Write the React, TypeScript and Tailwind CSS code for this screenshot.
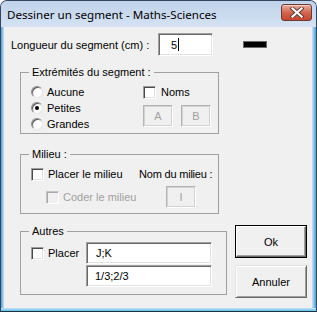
import React from "react";

function Radio({ checked }: { checked?: boolean }) {
  return (
    <div className="w-[12px] h-[12px] rounded-full bg-white border border-t-[#8c8c8c] border-l-[#8c8c8c] border-r-[#e6e6e6] border-b-[#e6e6e6] shadow-[inset_1px_1px_0_#5a5a5a] flex items-center justify-center shrink-0">
      {checked ? <div className="w-[4px] h-[4px] rounded-full bg-black" /> : null}
    </div>
  );
}

function Check({ disabled }: { disabled?: boolean }) {
  return disabled ? (
    <div className="w-[13px] h-[13px] bg-[#f0f0f0] border border-t-[#c4c4c4] border-l-[#c4c4c4] border-r-white border-b-white shadow-[inset_1px_1px_0_#a8a8a8] shrink-0" />
  ) : (
    <div className="w-[13px] h-[13px] bg-white border border-t-[#9c9c9c] border-l-[#9c9c9c] border-r-white border-b-white shadow-[inset_1px_1px_0_#4a4a4a,inset_-1px_-1px_0_#e3e3e3] shrink-0" />
  );
}

function TextBox({
  className,
  children,
}: {
  className: string;
  children?: React.ReactNode;
}) {
  return (
    <div
      className={
        "bg-white border border-t-[#a0a0a0] border-l-[#a0a0a0] border-r-white border-b-white shadow-[inset_1px_1px_0_#696969,inset_-1px_-1px_0_#e3e3e3] flex items-center " +
        className
      }
    >
      {children}
    </div>
  );
}

function DisabledBox({ className, text }: { className: string; text: string }) {
  return (
    <div
      className={
        "bg-[#f0f0f0] border border-t-[#b4b4b4] border-l-[#b4b4b4] border-r-white border-b-white shadow-[inset_1px_1px_0_#d2d2d2,inset_-1px_-1px_0_#d2d2d2] flex items-center justify-center text-[#a0a0a0] " +
        className
      }
    >
      {text}
    </div>
  );
}

export default function App() {
  const ctl = "font-['Liberation_Sans',Arial,sans-serif] text-[11px] leading-[14px] text-black";
  return (
    <div className="w-[317px] h-[312px] border border-[#34465c] border-b-[#1d3346] rounded-t-[7px] bg-[#cfdff2] flex flex-col overflow-hidden">
      {/* title bar */}
      <div className="h-[26px] flex items-start justify-between pl-[6px] pr-[4px] shrink-0 bg-gradient-to-b from-[#c0d3eb] to-[#d4e2f3]">
        <div className="font-['Noto_Sans',sans-serif] text-[11.6px] leading-[16px] text-black mt-[6px]">
          Dessiner un segment - Maths-Sciences
        </div>
        <div className="mt-[3px] w-[31px] h-[17px] rounded-[3px] border border-[#6b3a33] bg-gradient-to-b from-[#e9ad9f] via-[#d2664f] to-[#c8452c] shadow-[inset_0_1px_0_#f3cdc4] flex items-center justify-center">
          <svg width="14" height="11" viewBox="0 0 14 11">
            <path d="M2.5 1.5 L11.5 9.5 M11.5 1.5 L2.5 9.5" stroke="#5b3a36" strokeWidth="4" strokeLinecap="square" fill="none" />
            <path d="M2.5 1.5 L11.5 9.5 M11.5 1.5 L2.5 9.5" stroke="#ffffff" strokeWidth="2.2" strokeLinecap="square" fill="none" />
          </svg>
        </div>
      </div>

      {/* client */}
      <div className="flex flex-1 min-h-0">
        <div className="w-[3px] bg-gradient-to-r from-[#3d9fdc] to-[#cfe0f2]" />
        <div className={"w-[308px] h-[281px] bg-[#f0f0f0] flex flex-col shrink-0 " + ctl}>
          {/* row 1 */}
          <div className="mt-[6px] h-[23px] flex items-center pl-[7px]">
            <div className="w-[147px]">Longueur du segment (cm) :</div>
            <TextBox className="w-[55px] h-[23px] pl-[12px]">
              <span>5</span>
              <span className="w-px h-[13px] bg-black ml-[1px]" />
            </TextBox>
            <div className="ml-[30px] w-[24px] h-[7px] bg-black border border-[#6a6a6a]" />
          </div>

          {/* group 1 */}
          <fieldset className="mt-[9px] ml-[16px] w-[199px] border border-[#a0a0a0] p-0">
            <legend className="ml-[8px] px-[3px] leading-[14px]">Extrémités du segment :</legend>
            <div className="flex pl-[10px] pt-[5px] pb-[1px]">
              <div className="w-[112px] flex flex-col">
                <div className="h-[16px] flex items-center gap-[4px]">
                  <Radio />
                  <span>Aucune</span>
                </div>
                <div className="h-[16px] flex items-center gap-[4px]">
                  <Radio checked />
                  <span>Petites</span>
                </div>
                <div className="h-[16px] flex items-center gap-[4px]">
                  <Radio />
                  <span>Grandes</span>
                </div>
              </div>
              <div className="flex flex-col">
                <div className="h-[16px] flex items-center gap-[5px]">
                  <Check />
                  <span>Noms</span>
                </div>
                <div className="mt-[5px] flex gap-[8px]">
                  <DisabledBox className="w-[30px] h-[22px]" text="A" />
                  <DisabledBox className="w-[30px] h-[22px]" text="B" />
                </div>
              </div>
            </div>
          </fieldset>

          {/* group 2 */}
          <fieldset className="mt-[13px] ml-[16px] w-[199px] border border-[#a0a0a0] p-0">
            <legend className="ml-[8px] px-[3px] leading-[14px]">Milieu :</legend>
            <div className="flex pl-[10px] pt-[5px] pb-[5px]">
              <div className="w-[108px] flex flex-col">
                <div className="h-[16px] flex items-center gap-[4px]">
                  <Check />
                  <span>Placer le milieu</span>
                </div>
                <div className="mt-[4px] h-[22px] flex items-center gap-[4px] pl-[15px]">
                  <Check disabled />
                  <span className="text-[#a0a0a0]">Coder le milieu</span>
                </div>
              </div>
              <div className="flex flex-col">
                <div className="h-[16px] flex items-center tracking-[-0.2px]">Nom du milieu :</div>
                <div className="mt-[4px] pl-[27px]">
                  <DisabledBox className="w-[30px] h-[22px]" text="I" />
                </div>
              </div>
            </div>
          </fieldset>

          {/* group 3 + buttons */}
          <div className="mt-[10px] flex items-start">
            <fieldset className="ml-[16px] w-[207px] border border-[#a0a0a0] p-0">
              <legend className="ml-[8px] px-[3px] leading-[14px]">Autres</legend>
              <div className="flex pl-[10px] pt-[4px] pb-[7px]">
                <div className="w-[55px] h-[22px] flex items-center gap-[4px]">
                  <Check />
                  <span>Placer</span>
                </div>
                <div className="flex flex-col gap-[1px]">
                  <TextBox className="w-[126px] h-[22px] pl-[9px]">J;K</TextBox>
                  <TextBox className="w-[126px] h-[22px] pl-[8px]">1/3;2/3</TextBox>
                </div>
              </div>
            </fieldset>
            <div className="ml-[8px] mt-[1px] flex flex-col">
              <div className="w-[72px] h-[33px] border border-black">
                <div className="w-full h-full border border-t-white border-l-white border-r-[#696969] border-b-[#696969] shadow-[inset_-1px_-1px_0_#a0a0a0] flex items-center justify-center">
                  Ok
                </div>
              </div>
              <div className="mt-[7px] w-[72px] h-[33px] border border-t-[#e3e3e3] border-l-[#e3e3e3] border-r-[#696969] border-b-[#696969] shadow-[inset_1px_1px_0_white,inset_-1px_-1px_0_#a0a0a0] flex items-center justify-center">
                Annuler
              </div>
            </div>
          </div>
        </div>
        <div className="flex-1 bg-gradient-to-r from-[#cfe0f2] to-[#3d9fdc]" />
      </div>
      <div className="h-[3px] shrink-0 bg-gradient-to-b from-[#cfe0f2] to-[#4fc3ec]" />
    </div>
  );
}
